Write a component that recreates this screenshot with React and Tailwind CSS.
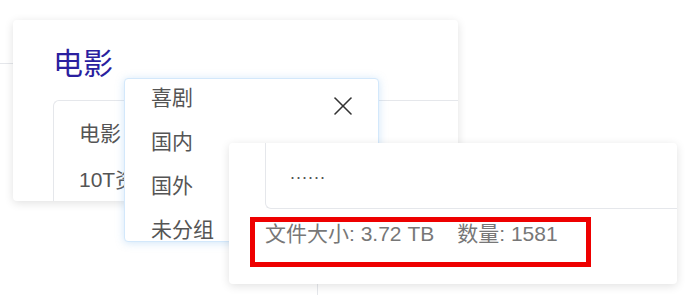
import { X } from "lucide-react";

const font = { fontFamily: '"Liberation Sans", "Noto Sans CJK SC", sans-serif' };

function MovieCard() {
  return (
    <div className="absolute left-[13px] top-[20px] w-[445px] h-[181px] bg-white rounded-sm shadow-[0_2px_10px_rgba(0,0,0,0.12)] overflow-hidden">
      <h2 className="pl-[40px] pt-[27px] text-[30px] leading-[34px] text-[#2b1f9f]">电影</h2>
      <div className="ml-[40px] mt-[19px] w-[480px] h-[120px] border-l border-t border-gray-200 rounded-tl-md pl-[25px] pt-[20px] text-[21px] leading-[26px] text-[#555]">
        <p>电影</p>
        <p className="mt-[20px]">10T资源</p>
      </div>
    </div>
  );
}

function GroupMenu() {
  const items = ["喜剧", "国内", "国外", "未分组"];
  return (
    <div className="absolute left-[124px] top-[78px] w-[255px] h-[164px] bg-white border border-[#d3e8fb] rounded-sm shadow-[0_1px_8px_rgba(120,180,235,0.35)] overflow-hidden">
      <ul className="pt-[6px] text-[21px] leading-[26px] text-[#555]">
        {items.map((item, i) => (
          <li key={item} className="h-[44px] pl-[26px] pr-[19px] flex items-start justify-between">
            <span>{item}</span>
            {i === 0 && <X className="w-8 h-8 mt-[5px] text-[#333]" strokeWidth={1.2} />}
          </li>
        ))}
      </ul>
    </div>
  );
}

function StatsCard() {
  return (
    <div className="absolute left-[229px] top-[143px] w-[448px] h-[141px] bg-white rounded-sm shadow-[0_2px_10px_rgba(0,0,0,0.12)] overflow-hidden">
      <div className="ml-[36px] h-[66px] border-l border-b border-gray-200 rounded-bl-md flex items-center pl-[24px] pb-[4px] text-[18px] text-[#555] tracking-[1px]">
        ......
      </div>
      <div className="ml-[21px] mt-[8px] w-[341px] h-[50px] border-[5px] border-[#ee0000] pl-[10px] flex gap-[23px] text-[21px] leading-[24px] text-[#777]">
        <span>文件大小: 3.72 TB</span>
        <span>数量: 1581</span>
      </div>
    </div>
  );
}

export default function App() {
  return (
    <div className="relative w-[700px] h-[295px] bg-white overflow-hidden" style={font}>
      <div className="absolute left-0 top-[63px] w-[20px] h-px bg-gray-200" />
      <div className="absolute left-[317px] top-[280px] w-px h-[20px] bg-gray-200" />
      <MovieCard />
      <GroupMenu />
      <StatsCard />
    </div>
  );
}
